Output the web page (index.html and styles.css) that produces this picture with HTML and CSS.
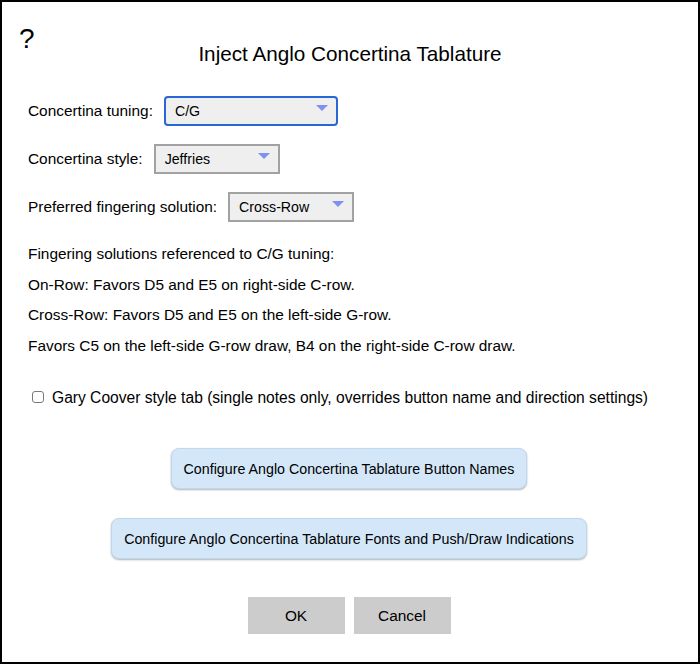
FILE: index.html
```html
<!DOCTYPE html>
<html lang="en">
<head>
<meta charset="utf-8">
<title>Inject Anglo Concertina Tablature</title>
<link rel="stylesheet" href="styles.css">
</head>
<body>
<div class="dialog">
  <div class="help">?</div>
  <h1 class="title">Inject Anglo Concertina Tablature</h1>

  <div class="fields">
    <div class="field">
      <span class="label">Concertina tuning:</span>
      <div class="select select-focus select-wide">
        <span class="select-text">C/G</span>
        <svg class="arrow" width="12" height="6" viewBox="0 0 12 6"><path d="M0 0 H12 L6 6 Z" fill="#7f90ef"/></svg>
      </div>
    </div>
    <div class="field">
      <span class="label">Concertina style:</span>
      <div class="select">
        <span class="select-text">Jeffries</span>
        <svg class="arrow" width="12" height="6" viewBox="0 0 12 6"><path d="M0 0 H12 L6 6 Z" fill="#7f90ef"/></svg>
      </div>
    </div>
    <div class="field">
      <span class="label">Preferred fingering solution:</span>
      <div class="select">
        <span class="select-text">Cross-Row</span>
        <svg class="arrow" width="12" height="6" viewBox="0 0 12 6"><path d="M0 0 H12 L6 6 Z" fill="#7f90ef"/></svg>
      </div>
    </div>
  </div>

  <div class="info">
    <p>Fingering solutions referenced to C/G tuning:</p>
    <p>On-Row: Favors D5 and E5 on right-side C-row.</p>
    <p>Cross-Row: Favors D5 and E5 on the left-side G-row.</p>
    <p>Favors C5 on the left-side G-row draw, B4 on the right-side C-row draw.</p>
  </div>

  <label class="check-row">
    <input type="checkbox" class="check">
    <span>Gary Coover style tab (single notes only, overrides button name and direction settings)</span>
  </label>

  <div class="config">
    <button class="config-btn">Configure Anglo Concertina Tablature Button Names</button>
    <button class="config-btn">Configure Anglo Concertina Tablature Fonts and Push/Draw Indications</button>
  </div>

  <div class="actions">
    <button class="action-btn">OK</button>
    <button class="action-btn">Cancel</button>
  </div>
</div>
</body>
</html>
```
FILE: styles.css
```css
html, body {
  margin: 0;
  padding: 0;
  background: #fff;
}

body {
  font-family: "Liberation Sans", Arial, Helvetica, sans-serif;
  color: #000;
  font-size: 15.4px;
}

.dialog {
  box-sizing: border-box;
  width: 700px;
  height: 664px;
  border: 2px solid #000;
  position: relative;
  padding: 40px 26px 0 26px;
}

.help {
  position: absolute;
  left: 17px;
  top: 21px;
  font-size: 28px;
  line-height: 32px;
}

.title {
  margin: 0;
  font-weight: normal;
  font-size: 20.7px;
  line-height: 24px;
  text-align: center;
}

.fields {
  margin-top: 30px;
  display: flex;
  flex-direction: column;
  gap: 18px;
}

.field {
  display: flex;
  align-items: center;
  gap: 11px;
  height: 30px;
}

.label {
  font-size: 15.4px;
}

.select {
  box-sizing: border-box;
  width: 126px;
  height: 30px;
  background: #efefef;
  border: 2px solid #a2a2a2;
  display: flex;
  justify-content: space-between;
  align-items: center;
  padding: 0 8px 0 9px;
  font-size: 14.2px;
}

.select-wide {
  width: 174px;
}

.select-focus {
  border-color: #2a67d6;
  border-radius: 4px;
}

.arrow {
  align-self: flex-start;
  margin-top: 7px;
  flex: none;
}

.info {
  margin-top: 23px;
  display: flex;
  flex-direction: column;
  gap: 12.7px;
}

.info p {
  margin: 0;
  line-height: 18px;
}

.check-row {
  margin-top: 34px;
  display: flex;
  align-items: center;
  gap: 8px;
  line-height: 18px;
  padding-left: 4px;
  font-size: 15.6px;
}

.check {
  appearance: none;
  -webkit-appearance: none;
  box-sizing: border-box;
  width: 12px;
  height: 12px;
  margin: 0;
  border: 1px solid #7a7a7a;
  border-radius: 3px;
  background: #fff;
  flex: none;
  position: relative;
  top: -1px;
}

.config {
  margin-top: 41px;
  display: flex;
  flex-direction: column;
  align-items: center;
  gap: 29px;
  padding-right: 2px;
}

.config-btn {
  font-family: inherit;
  font-size: 14.25px;
  color: #000;
  height: 41px;
  padding: 0 12px;
  background: #d3e7f9;
  border: 1px solid #bed8f0;
  border-radius: 8px;
  box-shadow: 0 1px 2px rgba(0, 0, 0, 0.3);
}

.actions {
  margin-top: 38px;
  display: flex;
  justify-content: center;
  gap: 9px;
  padding-right: 2px;
}

.action-btn {
  font-family: inherit;
  font-size: 15.4px;
  color: #000;
  width: 97px;
  height: 37px;
  padding: 0;
  background: #cccccc;
  border: none;
  border-radius: 0;
}
```
